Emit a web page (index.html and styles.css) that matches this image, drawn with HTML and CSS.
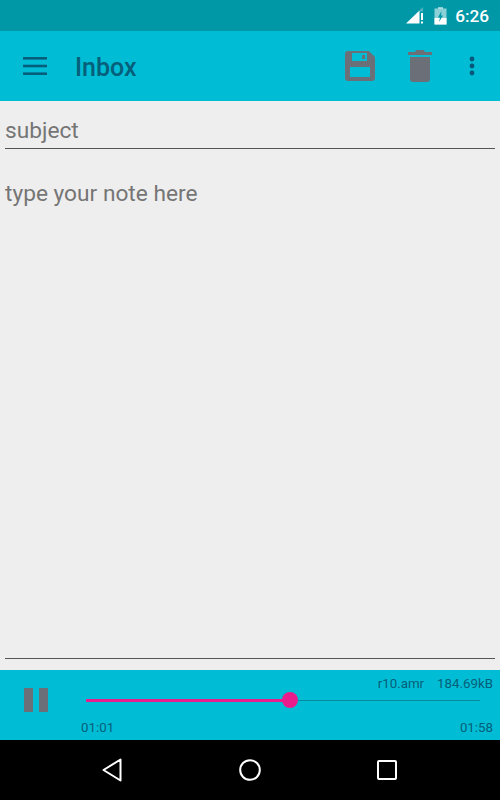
FILE: index.html
```html
<!DOCTYPE html>
<html>

<head>
  <meta name="viewport" content="width=device-width, initial-scale=1">
  <link rel="stylesheet" href="styles.css">
</head>

<body>
  <div class="statusbar">
    <svg class="signal" width="18" height="17" viewBox="0 0 18 17">
      <path d="M0 16.5 L13.5 3.5 V16.5 Z" fill="#fff" />
      <path d="M13.5 3.5 L17 0 V4.5 H13.5 Z" fill="#fff" opacity="0.3" />
      <rect x="15" y="6" width="2" height="7" fill="#fff" />
      <rect x="15" y="14.5" width="2" height="2" fill="#fff" />
    </svg>
    <svg class="battery" width="13" height="18" viewBox="0 0 13 18">
      <rect x="4" y="0" width="5" height="2" fill="#fff" opacity="0.55" />
      <rect x="0.5" y="1.5" width="12" height="16" fill="#fff" opacity="0.55" />
      <path d="M0.5 11 H12.5 V17.5 H0.5 Z" fill="#fff" />
      <path d="M7.5 4 L4 10.5 H6 L5 15 L9 8.5 H7 Z" fill="#0097a7" />
    </svg>
    <span class="clock">6:26</span>
  </div>

  <div class="toolbar">
    <svg class="menu-icon" width="24" height="18" viewBox="0 0 24 18">
      <rect x="0" y="0" width="24" height="2.6" fill="#055f7a" />
      <rect x="0" y="7.7" width="24" height="2.6" fill="#055f7a" />
      <rect x="0" y="15.4" width="24" height="2.6" fill="#055f7a" />
    </svg>
    <span class="title">Inbox</span>
    <svg class="save-icon" width="30" height="30" viewBox="0 0 30 30">
      <path fill="#6b7078" fill-rule="evenodd" d="M3 0 H24 L30 6 V27 a3 3 0 0 1 -3 3 H3 a3 3 0 0 1 -3 -3 V3 a3 3 0 0 1 3 -3 Z M7 2 V10 H22 V2 Z M5 16 V26 H25 V16 Z" />
      <rect x="17" y="4" width="3" height="4" fill="#6b7078" />
    </svg>
    <svg class="trash-icon" width="24" height="32" viewBox="0 0 24 32">
      <path fill="#6b7078" d="M8 0 H16 L17 2 H24 V5 H0 V2 H7 Z" />
      <path fill="#6b7078" d="M2 7 H22 V29 a3 3 0 0 1 -3 3 H5 a3 3 0 0 1 -3 -3 Z" />
    </svg>
    <svg class="more-icon" width="6" height="20" viewBox="0 0 6 20">
      <circle cx="3" cy="3" r="2.4" fill="#06587a" />
      <circle cx="3" cy="10" r="2.4" fill="#06587a" />
      <circle cx="3" cy="17" r="2.4" fill="#06587a" />
    </svg>
  </div>

  <div class="note">
    <div class="subject">subject</div>
    <div class="body-text">type your note here</div>
  </div>

  <div class="player">
    <svg class="pause-icon" width="24" height="24" viewBox="0 0 24 24">
      <rect x="0" y="0" width="9" height="24" fill="#6b7078" />
      <rect x="15" y="0" width="9" height="24" fill="#6b7078" />
    </svg>
    <div class="track-area">
      <div class="file-info">
        <span>r10.amr</span>
        <span>184.69kB</span>
      </div>
      <div class="seekbar">
        <div class="seek-done" style="width: 51%"></div>
        <div class="seek-rest"></div>
        <div class="seek-thumb"></div>
      </div>
      <div class="times">
        <span>01:01</span>
        <span>01:58</span>
      </div>
    </div>
  </div>

  <div class="navbar">
    <svg width="20" height="24" viewBox="0 0 20 24">
      <path d="M18.5 1.5 V22.5 L1.5 12 Z" fill="none" stroke="#fff" stroke-width="2" stroke-linejoin="round" />
    </svg>
    <svg width="22" height="22" viewBox="0 0 22 22">
      <circle cx="11" cy="11" r="9.8" fill="none" stroke="#fff" stroke-width="2" />
    </svg>
    <svg width="20" height="20" viewBox="0 0 20 20">
      <rect x="1" y="1" width="18" height="18" rx="1" fill="none" stroke="#fff" stroke-width="2" />
    </svg>
  </div>
</body>

</html>
```

FILE: styles.css
```css
* {
  box-sizing: border-box;
}

html,
body {
  margin: 0;
  padding: 0;
}

body {
  width: 500px;
  height: 800px;
  display: flex;
  flex-direction: column;
  overflow: hidden;
  font-family: Roboto, sans-serif;
  background-color: #eeeeee;
}

.statusbar {
  height: 31px;
  flex: none;
  display: flex;
  align-items: center;
  justify-content: flex-end;
  padding-right: 11px;
  background-color: #0097a7;
}

.signal {
  margin-right: 10px;
}

.battery {
  margin-right: 8px;
}

.clock {
  color: #fff;
  font-size: 17.2px;
  font-weight: 500;
}

.toolbar {
  height: 70px;
  flex: none;
  display: flex;
  align-items: center;
  background-color: #00bcd4;
}

.menu-icon {
  margin-left: 23px;
  margin-top: -1px;
}

.title {
  margin-left: 28px;
  flex: 1;
  color: #055f7a;
  font-size: 25px;
  font-weight: 500;
  line-height: 29px;
  margin-top: 2px;
}

.save-icon {
  margin-right: 33px;
  margin-top: -1px;
}

.trash-icon {
  margin-right: 37px;
}

.more-icon {
  margin-right: 25px;
}

.note {
  flex: 1;
  padding: 0 5px;
  display: flex;
  flex-direction: column;
  color: #757575;
  font-size: 22.7px;
}

.subject {
  height: 47.5px;
  padding-top: 16px;
  line-height: 27px;
  border-bottom: 1px solid #555;
}

.body-text {
  flex: 1;
  padding-top: 32px;
  line-height: 26px;
  border-bottom: 1px solid #555;
  margin-bottom: 11px;
}

.player {
  height: 70px;
  flex: none;
  display: flex;
  align-items: center;
  background-color: #00bcd4;
}

.pause-icon {
  margin-left: 24px;
  margin-bottom: 10px;
  flex: none;
}

.track-area {
  flex: 1;
  height: 70px;
  margin-left: 33px;
  padding-right: 7px;
  display: flex;
  flex-direction: column;
  color: #055f7a;
  font-size: 13.3px;
}

.file-info {
  height: 30px;
  padding-top: 6px;
  display: flex;
  justify-content: flex-end;
  gap: 13px;
  line-height: 16px;
}

.seekbar {
  position: relative;
  height: 0;
  margin-left: 5px;
  margin-right: 13px;
  display: flex;
}

.seek-done {
  height: 3px;
  margin-top: -1px;
  background-color: #e91e8c;
}

.seek-rest {
  flex: 1;
  height: 1px;
  background-color: #0a8aa0;
}

.seek-thumb {
  position: absolute;
  left: 196px;
  top: -8px;
  width: 16px;
  height: 16px;
  border-radius: 50%;
  background-color: #e91e8c;
}

.times {
  margin-top: 20px;
  line-height: 16px;
  display: flex;
  justify-content: space-between;
}

.navbar {
  height: 60px;
  flex: none;
  display: flex;
  align-items: center;
  background-color: #000;
  padding-left: 102px;
  padding-right: 103px;
  justify-content: space-between;
}
```
